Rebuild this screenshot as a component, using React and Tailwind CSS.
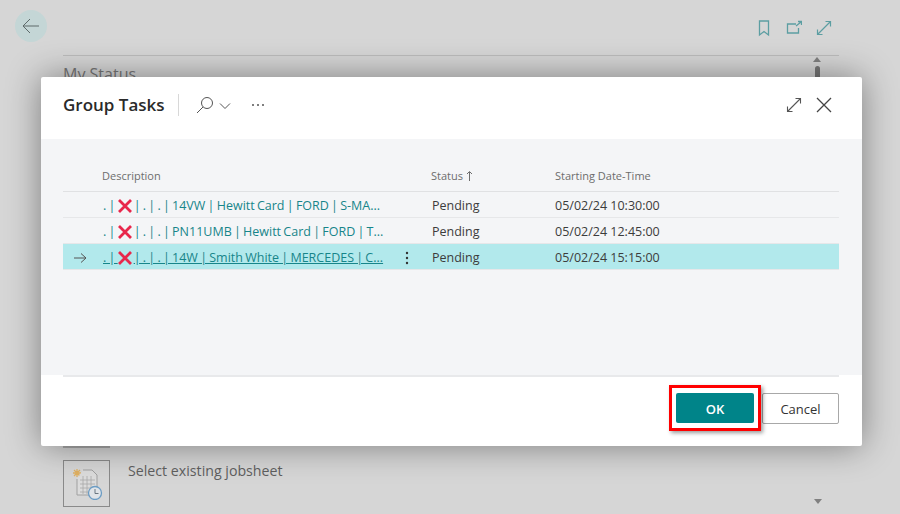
function Row({ selected, text, date }) {
  return (
    <div className={`flex h-[26px] items-center border-b border-[#e6e7e9] pt-[3px] text-[12.5px] ${selected ? "bg-[#b2e9ec]" : ""}`}>
      <div className="flex w-[33px] shrink-0 justify-center">
        {selected && (
          <svg width="14" height="12" viewBox="0 0 14 12" fill="none" stroke="#555" strokeWidth="1">
            <path d="M1 6h12M8 1.500 13 6l-5 4.500" />
          </svg>
        )}
      </div>
      <div className="flex w-[336px] shrink-0 items-center pl-[7px]">
        <span className={`flex w-[280px] shrink-0 items-center whitespace-nowrap text-[#17858a] [word-spacing:-1px] ${selected ? "underline" : ""}`}>
          <span className="whitespace-pre">. | </span>
          <svg width="14" height="14" viewBox="0 0 14 14" className="shrink-0" fill="none" stroke="#e8274b" strokeWidth="2.800">
            <path d="M1 1l12 12M13 1 1 13" />
          </svg>
          <span className="ml-[2px] whitespace-pre">{text}</span>
        </span>
        {selected && (
          <svg width="4" height="14" viewBox="0 0 4 14" className="ml-[22px]" fill="#333">
            <circle cx="2" cy="2" r="1.200" /><circle cx="2" cy="7" r="1.200" /><circle cx="2" cy="12" r="1.200" />
          </svg>
        )}
      </div>
      <div className="w-[123px] shrink-0 text-[#3c3c3c]">Pending</div>
      <div className="text-[#3c3c3c]">{date}</div>
    </div>
  );
}

export default function App() {
  return (
    <div className="relative h-[514px] w-[900px] overflow-hidden bg-[#d6d6d6] font-['Open_Sans','Noto_Sans',sans-serif]">
      {/* page behind */}
      <div className="flex items-center justify-between pl-[15px] pr-[68px] pt-[10px]">
        <div className="flex h-[32px] w-[32px] items-center justify-center rounded-full bg-[#c4d6d6]">
          <svg width="18" height="16" viewBox="0 0 18 16" fill="none" stroke="#5e6a6a" strokeWidth="1">
            <path d="M17 8H1M8 1 1 8l7 7" />
          </svg>
        </div>
        <div className="mt-[3px] flex items-center gap-[14px] text-[#5c9ea2]">
          <svg width="16" height="18" viewBox="0 0 16 18" fill="none" stroke="currentColor" strokeWidth="1.300"><path d="M3.500 2h9v14L8 12.500 3.500 16z" /></svg>
          <svg width="16" height="16" viewBox="0 0 16 16" fill="none" stroke="currentColor" strokeWidth="1.300"><path d="M10 4H1.500v9h11V8M10 6l5-4M12 1.500h3.500V5" /></svg>
          <svg width="16" height="16" viewBox="0 0 16 16" fill="none" stroke="currentColor" strokeWidth="1.200"><path d="M1.500 14.500l13-13M9.500 1.500h5v5M1.500 9.500v5h5" /></svg>
        </div>
      </div>
      <div className="ml-[63px] mr-[61px] mt-[13px] border-t border-[#bcbcbc] pt-[7px] text-[16px] leading-[22px] text-[#777]">My Status</div>
      <div className="absolute left-[813px] top-[57px] h-0 w-0 border-x-[4px] border-b-[5px] border-x-transparent border-b-[#808080]" />
      <div className="absolute left-[815px] top-[66px] h-[12px] w-[5px] rounded-t-full bg-[#777]" />
      <div className="absolute left-[814px] top-[499px] h-0 w-0 border-x-[4px] border-t-[5px] border-x-transparent border-t-[#808080]" />
      <div className="absolute left-[63px] top-[446px] h-[2px] w-[47px] bg-[#a8a8a8]" />

      <div className="absolute left-[63px] top-[460px] flex gap-[18px]">
        <div className="flex h-[47px] w-[47px] items-center justify-center border border-[#8a8a8a]">
          <svg width="32" height="32" viewBox="0 0 32 32" fill="none">
            <path d="M2 5h8M6 1v8M3 2l6 6M9 2l-6 6" stroke="#e0b060" strokeWidth="1.300" />
            <path d="M12 2h9l5 5v20H6V11" fill="#dcdcdc" stroke="#a0a0a0" />
            <path d="M9 12h15M9 16h15M9 20h15M9 24h15M12 8v18M16 8v18M20 8v18" stroke="#a8a8a8" strokeWidth="0.800" />
            <circle cx="24" cy="25" r="6.500" fill="#e0e4e8" stroke="#6b9cc4" strokeWidth="1.300" />
            <path d="M24 21v4.500h3.500" stroke="#6a7680" strokeWidth="1" />
          </svg>
        </div>
        <span className="text-[14.2px] leading-[22px] text-[#5f5f5f]">Select existing jobsheet</span>
      </div>

      {/* dialog */}
      <div className="absolute left-[41px] top-[77px] flex h-[369px] w-[821px] flex-col rounded-[2px] bg-white shadow-[0_0_34px_rgba(0,0,0,0.42)]">
        <header className="flex h-[62px] shrink-0 items-center pb-[6px] pl-[22px] pr-[30px]">
          <h1 className="text-[17px] font-semibold leading-[24px] text-[#2a2a2a]">Group Tasks</h1>
          <div className="ml-[13px] h-[22px] w-px bg-[#d8d8d8]" />
          <svg width="18" height="18" viewBox="0 0 18 18" fill="none" stroke="#555" strokeWidth="1" className="ml-[17px]">
            <circle cx="11" cy="7" r="5.500" /><path d="M7 11 1 17" />
          </svg>
          <svg width="12" height="8" viewBox="0 0 12 8" fill="none" stroke="#555" strokeWidth="1" className="ml-[5px] mt-[2px]">
            <path d="M1 1.500 6 6.500l5-5" />
          </svg>
          <div className="ml-[21px] flex gap-[3px]">
            <span className="h-[2px] w-[2px] rounded-full bg-[#555]" />
            <span className="h-[2px] w-[2px] rounded-full bg-[#555]" />
            <span className="h-[2px] w-[2px] rounded-full bg-[#555]" />
          </div>
          <div className="ml-auto flex items-center gap-[14px]">
            <svg width="16" height="16" viewBox="0 0 16 16" fill="none" stroke="#555" strokeWidth="1.100"><path d="M1.500 14.500l13-13M9.500 1.500h5v5M1.500 9.500v5h5" /></svg>
            <svg width="16" height="16" viewBox="0 0 16 16" fill="none" stroke="#444" strokeWidth="1.300"><path d="M1 1l14 14M15 1 1 15" /></svg>
          </div>
        </header>

        <main className="h-[236px] shrink-0 bg-[#f4f5f7] pl-[22px] pr-[23px] pt-[26px]">
          <div className="flex h-[27px] items-start border-b border-[#e0e1e3] text-[11px] leading-[22px] text-[#6d6d6d]">
            <div className="w-[39px] shrink-0" />
            <div className="w-[329px] shrink-0">Description</div>
            <div className="flex w-[124px] shrink-0 items-center gap-[3px]">
              Status
              <svg width="7" height="10" viewBox="0 0 7 10" fill="none" stroke="#6d6d6d" strokeWidth="1"><path d="M3.500 10V1M1 3l2.500-2.500L6 3" /></svg>
            </div>
            <div>Starting Date-Time</div>
          </div>
          <Row text="| . | . | 14VW | Hewitt Card | FORD | S-MA..." date="05/02/24 10:30:00" />
          <Row text="| . | . | PN11UMB | Hewitt Card | FORD | T..." date="05/02/24 12:45:00" />
          <Row selected text="| . | . | 14W | Smith White | MERCEDES | C..." date="05/02/24 15:15:00" />
        </main>

        <footer className="flex flex-1 items-start pl-[22px] pr-[23px]">
          <div className="flex flex-1 items-start justify-end gap-[8px] border-t-2 border-[#e8e9eb] pt-[16px]">
            <div className="relative">
              <button className="block h-[30px] w-[78px] rounded-[2px] bg-[#008489] pt-[3px] text-[13px] font-semibold text-white">OK</button>
              <div className="absolute -inset-x-[7px] -inset-y-[8px] border-[3px] border-[#ff0000] shadow-[2px_2px_4px_rgba(0,0,0,0.4)]" />
            </div>
            <button className="h-[31px] w-[77px] rounded-[2px] border border-[#a8a8a8] bg-white pt-[3px] text-[13px] text-[#333]">Cancel</button>
          </div>
        </footer>
      </div>
    </div>
  );
}
